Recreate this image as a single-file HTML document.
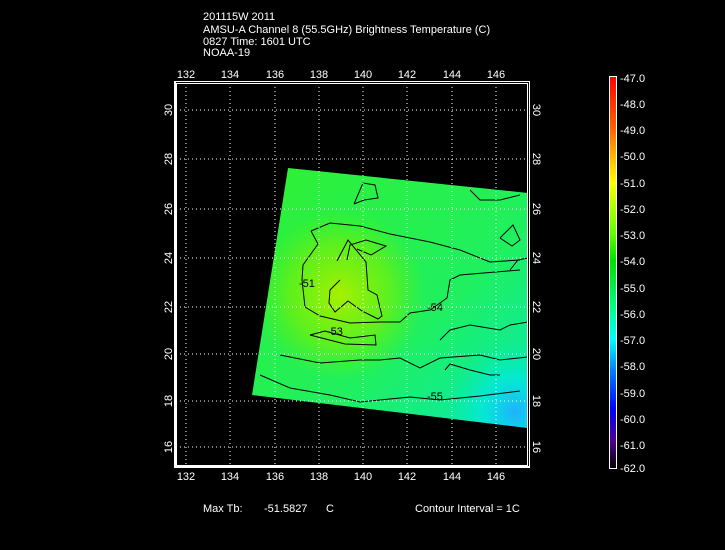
<!DOCTYPE html>
<html><head><style>
html,body{margin:0;padding:0;background:#000;}
svg{display:block;}
text{font-family:"Liberation Sans",sans-serif;fill:#fff;font-size:11px;}
</style></head><body>
<svg width="725" height="550" viewBox="0 0 725 550">
<defs>
<linearGradient id="cb" x1="0" y1="0" x2="0" y2="1">
<stop offset="0" stop-color="#ff0000"/>
<stop offset="0.13" stop-color="#ff6000"/>
<stop offset="0.2" stop-color="#ffb000"/>
<stop offset="0.27" stop-color="#ffff00"/>
<stop offset="0.4" stop-color="#60ff00"/>
<stop offset="0.47" stop-color="#00e000"/>
<stop offset="0.6" stop-color="#00ff90"/>
<stop offset="0.67" stop-color="#00ffff"/>
<stop offset="0.75" stop-color="#0080ff"/>
<stop offset="0.85" stop-color="#0000ff"/>
<stop offset="0.93" stop-color="#500090"/>
<stop offset="1" stop-color="#000000"/>
</linearGradient>
<linearGradient id="base" x1="0" y1="0" x2="1" y2="1">
<stop offset="0" stop-color="#30f030"/>
<stop offset="0.6" stop-color="#20f060"/>
<stop offset="1" stop-color="#00e8c0"/>
</linearGradient>
<radialGradient id="yel" cx="340" cy="295" r="85" gradientUnits="userSpaceOnUse">
<stop offset="0" stop-color="#a8f000" stop-opacity="1"/>
<stop offset="0.6" stop-color="#80f000" stop-opacity="0.6"/>
<stop offset="1" stop-color="#60f000" stop-opacity="0"/>
</radialGradient>
<radialGradient id="cy" cx="515" cy="412" r="70" gradientUnits="userSpaceOnUse">
<stop offset="0" stop-color="#20b0ff" stop-opacity="1"/>
<stop offset="0.5" stop-color="#00e8f0" stop-opacity="0.6"/>
<stop offset="1" stop-color="#00f0c0" stop-opacity="0"/>
</radialGradient>
<clipPath id="dc"><polygon points="288,168 528,193 528,428 252,395"/></clipPath>
</defs>

<text x="203" y="20">201115W 2011</text>
<text x="203" y="33">AMSU-A Channel 8 (55.5GHz) Brightness Temperature (C)</text>
<text x="203" y="45">0827 Time: 1601 UTC</text>
<text x="203" y="56">NOAA-19</text>

<g clip-path="url(#dc)">
<rect x="240" y="160" width="300" height="280" fill="url(#base)"/>
<rect x="240" y="160" width="300" height="280" fill="url(#yel)"/>
<rect x="240" y="160" width="300" height="280" fill="url(#cy)"/>
<g fill="none" stroke="#000" stroke-width="1">
<polyline points="337,261 348,240 366,262 368,290 377,295 382,316 378,319 362,311 348,301 335,312 329,303 330,290 340,280"/>
<polyline points="347,260 350,245 366,240 386,246 371,255 357,249"/>
<polyline points="311,231 330,223 360,226 390,234 430,242 460,250 490,262 520,260"/>
<polyline points="311,231 318,244 303,265 302,280 305,307 320,316 350,323 380,322 400,322 410,313 430,310 447,298 450,280 460,275 520,270"/>
<polyline points="310,335 325,331 350,338 375,335 376,345 345,344 310,335"/>
<polyline points="280,355 320,363 360,360 380,360 400,358 420,368 440,358 480,355 500,360 528,357"/>
<polyline points="260,375 290,388 330,395 360,402 380,400 410,397 440,400 480,396 520,391"/>
<polyline points="354,204 363,183 375,185 378,198 364,200 354,204"/>
<polyline points="470,190 480,200 500,200 520,195"/>
<polyline points="440,340 450,330 470,325 500,330 510,325 528,322"/>
<polyline points="510,270 518,260 528,258"/>
<polyline points="500,238 513,225 520,240 512,246 500,238"/>
<polyline points="445,370 450,364 470,370 490,375 500,375"/>
</g>
<text x="299" y="287" font-size="10" style="fill:#000">-51</text>
<text x="327" y="335" font-size="10" style="fill:#000">-53</text>
<text x="427" y="311" font-size="10" style="fill:#000">-54</text>
<text x="427" y="400" font-size="10" style="fill:#000">-55</text>
</g>

<g stroke="#fff" stroke-width="1" stroke-dasharray="1,3">
<line x1="186" y1="83" x2="186" y2="466"/>
<line x1="230" y1="83" x2="230" y2="466"/>
<line x1="275" y1="83" x2="275" y2="466"/>
<line x1="319" y1="83" x2="319" y2="466"/>
<line x1="363" y1="83" x2="363" y2="466"/>
<line x1="407" y1="83" x2="407" y2="466"/>
<line x1="452" y1="83" x2="452" y2="466"/>
<line x1="496" y1="83" x2="496" y2="466"/>
<line x1="176" y1="110" x2="528" y2="110"/>
<line x1="176" y1="159" x2="528" y2="159"/>
<line x1="176" y1="209" x2="528" y2="209"/>
<line x1="176" y1="258" x2="528" y2="258"/>
<line x1="176" y1="307" x2="528" y2="307"/>
<line x1="176" y1="354" x2="528" y2="354"/>
<line x1="176" y1="401" x2="528" y2="401"/>
<line x1="176" y1="447" x2="528" y2="447"/>
</g>

<rect x="174.5" y="81.5" width="355" height="386" fill="none" stroke="#fff"/>
<rect x="176.5" y="83.5" width="351" height="382" fill="none" stroke="#fff"/>
<line x1="175" y1="81" x2="175" y2="468" stroke="#fff" stroke-width="2"/>
<line x1="174" y1="467" x2="530" y2="467" stroke="#fff" stroke-width="2"/>

<g text-anchor="middle">
<text x="186" y="78">132</text><text x="230" y="78">134</text><text x="275" y="78">136</text><text x="319" y="78">138</text><text x="363" y="78">140</text><text x="407" y="78">142</text><text x="452" y="78">144</text><text x="496" y="78">146</text>
<text x="186" y="480">132</text><text x="230" y="480">134</text><text x="275" y="480">136</text><text x="319" y="480">138</text><text x="363" y="480">140</text><text x="407" y="480">142</text><text x="452" y="480">144</text><text x="496" y="480">146</text>
</g>
<g text-anchor="middle">
<text transform="translate(172,110) rotate(-90)">30</text>
<text transform="translate(172,159) rotate(-90)">28</text>
<text transform="translate(172,209) rotate(-90)">26</text>
<text transform="translate(172,258) rotate(-90)">24</text>
<text transform="translate(172,307) rotate(-90)">22</text>
<text transform="translate(172,354) rotate(-90)">20</text>
<text transform="translate(172,401) rotate(-90)">18</text>
<text transform="translate(172,447) rotate(-90)">16</text>
<text transform="translate(533,110) rotate(90)">30</text>
<text transform="translate(533,159) rotate(90)">28</text>
<text transform="translate(533,209) rotate(90)">26</text>
<text transform="translate(533,258) rotate(90)">24</text>
<text transform="translate(533,307) rotate(90)">22</text>
<text transform="translate(533,354) rotate(90)">20</text>
<text transform="translate(533,401) rotate(90)">18</text>
<text transform="translate(533,447) rotate(90)">16</text>
</g>

<rect x="609.5" y="76.5" width="7" height="392" fill="url(#cb)" stroke="#fff"/>
<g>
<text x="620" y="82">-47.0</text>
<text x="620" y="108">-48.0</text>
<text x="620" y="134">-49.0</text>
<text x="620" y="160">-50.0</text>
<text x="620" y="187">-51.0</text>
<text x="620" y="213">-52.0</text>
<text x="620" y="239">-53.0</text>
<text x="620" y="265">-54.0</text>
<text x="620" y="292">-55.0</text>
<text x="620" y="318">-56.0</text>
<text x="620" y="344">-57.0</text>
<text x="620" y="370">-58.0</text>
<text x="620" y="397">-59.0</text>
<text x="620" y="423">-60.0</text>
<text x="620" y="449">-61.0</text>
<text x="620" y="472">-62.0</text>
</g>

<text x="203" y="512">Max Tb:</text>
<text x="264" y="512">-51.5827</text>
<text x="326" y="512">C</text>
<text x="415" y="512">Contour Interval = 1C</text>
</svg>
</body></html>
